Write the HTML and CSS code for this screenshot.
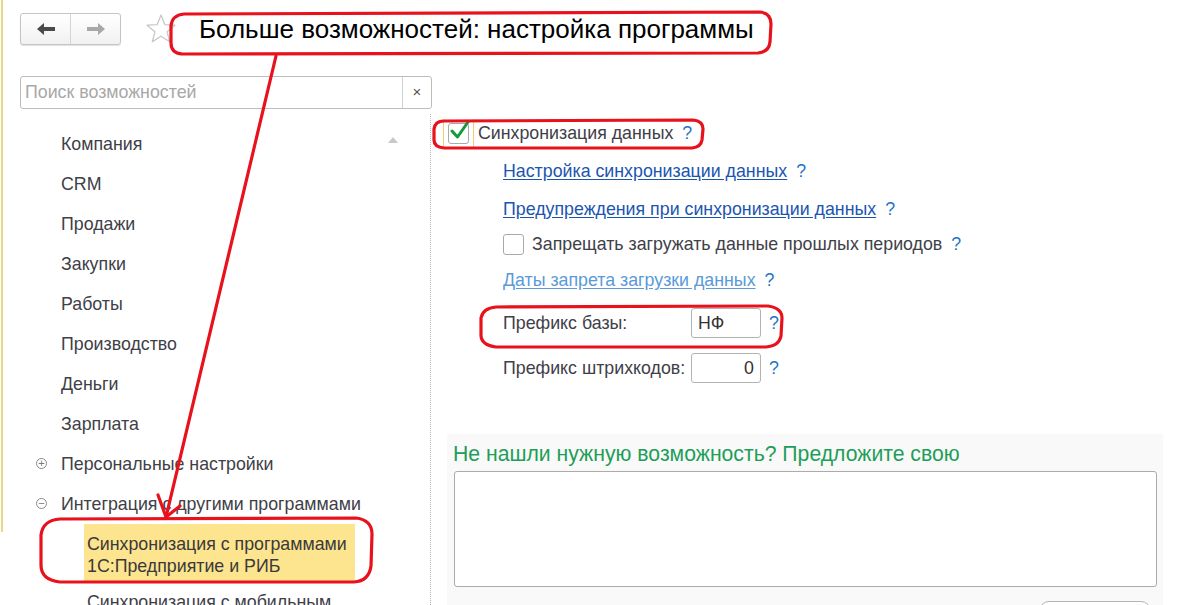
FILE: index.html
```html
<!DOCTYPE html>
<html lang="ru">
<head>
<meta charset="utf-8">
<title>Больше возможностей: настройка программы</title>
<link rel="stylesheet" href="styles.css">
</head>
<body>
<div class="app">
  <header class="topbar">
    <div class="nav">
      <button class="nav-btn back" aria-label="Назад">
        <svg width="20" height="14" viewBox="0 0 20 14"><path d="M1 7 L8 1 L8 5 L19 5 L19 9 L8 9 L8 13 Z" fill="#4a4a4a"/></svg>
      </button>
      <button class="nav-btn fwd" aria-label="Вперёд">
        <svg width="20" height="14" viewBox="0 0 20 14"><path d="M19 7 L12 1 L12 5 L1 5 L1 9 L12 9 L12 13 Z" fill="#a8a8a8"/></svg>
      </button>
    </div>
    <svg class="star" width="32" height="32" viewBox="0 0 32 32"><path d="M16 2 L19.8 11.6 L30 12.2 L22.1 18.8 L24.7 28.8 L16 23.2 L7.3 28.8 L9.9 18.8 L2 12.2 L12.2 11.6 Z" fill="none" stroke="#c8c8c8" stroke-width="1.3" stroke-linejoin="round"/></svg>
    <h1 class="title">Больше возможностей: настройка программы</h1>
  </header>

  <div class="main">
    <aside class="sidebar">
      <div class="search">
        <span class="search-ph">Поиск возможностей</span>
        <span class="search-clear">×</span>
      </div>
      <ul class="tree">
        <li class="tree-item">Компания</li>
        <li class="tree-item">CRM</li>
        <li class="tree-item">Продажи</li>
        <li class="tree-item">Закупки</li>
        <li class="tree-item">Работы</li>
        <li class="tree-item">Производство</li>
        <li class="tree-item">Деньги</li>
        <li class="tree-item">Зарплата</li>
        <li class="tree-item"><span class="toggle">+</span>Персональные настройки</li>
        <li class="tree-item"><span class="toggle">−</span>Интеграция с другими программами</li>
        <li class="tree-sub selected">Синхронизация с программами<br>1С:Предприятие и РИБ</li>
        <li class="tree-sub">Синхронизация с мобильным</li>
        <span class="scroll-up"></span>
      </ul>
    </aside>

    <section class="content">
      <div class="row r1">
        <span class="focus">
          <span class="checkbox checked">
            <svg class="check" width="22" height="22" viewBox="0 0 22 22"><path d="M3 11 L8.5 17 L19 2" fill="none" stroke="#17993a" stroke-width="3" stroke-linecap="round" stroke-linejoin="round"/></svg>
          </span>
        </span>
        <span class="label">Синхронизация данных</span><span class="q">?</span>
      </div>
      <div class="sub">
        <div class="row r2"><a class="link">Настройка синхронизации данных</a><span class="q">?</span></div>
        <div class="row r3"><a class="link">Предупреждения при синхронизации данных</a><span class="q">?</span></div>
        <div class="row r4"><span class="checkbox"></span><span class="label">Запрещать загружать данные прошлых периодов</span><span class="q">?</span></div>
        <div class="row r5"><a class="link light">Даты запрета загрузки данных</a><span class="q">?</span></div>
        <div class="row r6"><span class="field-label">Префикс базы:</span><span class="input">НФ</span><span class="q">?</span></div>
        <div class="row r7"><span class="field-label">Префикс штрихкодов:</span><span class="input num">0</span><span class="q">?</span></div>
      </div>
      <div class="panel">
        <h2 class="panel-title">Не нашли нужную возможность? Предложите свою</h2>
        <div class="textarea"></div>
        <div class="panel-actions"><span class="btn"></span></div>
      </div>
    </section>
  </div>

  <svg class="annot" width="1200" height="605" viewBox="0 0 1200 605">
    <g fill="none" stroke="#e8121c" stroke-width="3.2" stroke-linejoin="round" stroke-linecap="round">
      <path d="M184 14 L760 12 Q771 13 771 24 L770 42 Q769 52 758 53 L182 54 Q171 53 171 43 L171 26 Q172 15 184 14 Z"/>
      <path d="M444 121 L693 120 Q703 121 703 129 L702 140 Q701 147 692 148 L444 148 Q434 147 434 140 L434 129 Q435 121 444 121 Z"/>
      <path d="M496 307 L768 306 Q782 308 782 318 L781 336 Q779 346 766 347 L496 347 Q481 345 481 335 L481 318 Q483 308 496 307 Z"/>
      <path d="M60 519 L356 518 Q372 520 372 534 L371 566 Q369 581 354 582 L60 582 Q41 580 41 565 L41 535 Q43 520 60 519 Z"/>
      <path d="M276 56 L166 517"/>
      <path d="M158 495 L166 517 L180 506"/>
    </g>
  </svg>
</div>
</body>
</html>
```

FILE: styles.css
```css
* { box-sizing: border-box; }

html, body {
  margin: 0;
  padding: 0;
  background: #ffffff;
}

body {
  font-family: Arial, "Liberation Sans", "Noto Sans", sans-serif;
  font-size: 17.8px;
  color: #404048;
  width: 1200px;
  height: 605px;
  overflow: hidden;
}

.app {
  position: relative;
  width: 1200px;
  height: 605px;
  overflow: hidden;
}

.app::before {
  content: "";
  position: absolute;
  left: 1px;
  top: 0;
  width: 2px;
  height: 532px;
  background: #e8d88a;
}

/* top bar */
.topbar {
  display: flex;
  align-items: center;
  height: 76px;
  padding: 13px 0 31px 20px;
}

.nav {
  display: flex;
  width: 101px;
  height: 32px;
  border: 1px solid #c4c4c4;
  border-radius: 3px;
  background: linear-gradient(#ffffff, #f1f1f1);
  box-shadow: 0 1px 1px rgba(0,0,0,0.12);
}

.nav-btn {
  flex: 1;
  display: flex;
  align-items: center;
  justify-content: center;
  border: 0;
  background: transparent;
  padding: 0;
}

.nav-btn.back { border-right: 1px solid #d4d4d4; }

.star {
  margin-left: 24px;
  flex: none;
}

.title {
  margin: 0 0 0 22px;
  font-size: 26px;
  font-weight: normal;
  color: #000;
  white-space: nowrap;
}

/* main */
.main {
  display: flex;
  height: 529px;
}

.sidebar {
  width: 410px;
  margin-left: 20px;
  flex: none;
}

.search {
  display: flex;
  width: 412px;
  height: 33px;
  border: 1px solid #bdbdbd;
  border-radius: 3px;
  background: #fff;
}

.search-ph {
  flex: 1;
  padding-left: 4px;
  line-height: 31px;
  color: #a8a8a8;
}

.search-clear {
  width: 29px;
  border-left: 1px solid #d0d0d0;
  text-align: center;
  line-height: 30px;
  color: #555;
  font-size: 15px;
}

.tree {
  position: relative;
  list-style: none;
  margin: 15px 0 0 0;
  padding: 0;
}

.tree-item {
  display: flex;
  align-items: center;
  height: 40px;
  padding-left: 41px;
  white-space: nowrap;
  position: relative;
}

.toggle {
  position: absolute;
  left: 16px;
  top: 14px;
  width: 11px;
  height: 11px;
  border: 1px solid #8a8a8a;
  border-radius: 50%;
  font-size: 11px;
  line-height: 9px;
  text-align: center;
  color: #777;
}

.tree-sub {
  margin-left: 64px;
  padding: 9px 3px 3px 3px;
  line-height: 22px;
  width: 271px;
  white-space: nowrap;
}

.tree-sub.selected {
  height: 57px;
  background: #fde48e;
  color: #3a3a3a;
}

.tree-sub + .tree-sub { padding-top: 10px; }

.scroll-up {
  position: absolute;
  right: 32px;
  top: 13px;
  width: 0;
  height: 0;
  border-left: 5px solid transparent;
  border-right: 5px solid transparent;
  border-bottom: 6px solid #c8c8c8;
}

/* content */
.content {
  flex: 1;
  margin-top: 38px;
  border-left: 1px dotted #b5b5b5;
  padding-left: 16px;
}

.row {
  display: flex;
  align-items: center;
  white-space: nowrap;
}

.r1 { height: 38px; }
.r2 { height: 38px; }
.r3 { height: 38px; }
.r4 { height: 32px; }
.r5 { height: 40px; }
.r6 { height: 46px; }
.r7 { height: 44px; }

.sub { margin-left: 56px; }

.focus {
  display: flex;
  align-items: center;
  height: 28px;
  padding: 0 4px;
  margin-left: -4px;
  border-left: 1px solid #f0d070;
  border-right: 1px solid #f0d070;
}

.checkbox {
  position: relative;
  display: inline-block;
  width: 21px;
  height: 21px;
  border: 1px solid #a9a9a9;
  border-radius: 3px;
  background: #fff;
  flex: none;
}

.check {
  position: absolute;
  left: 0px;
  top: -4px;
}

.r1 .label { margin-left: 4px; }
.r4 .label { margin-left: 8px; }

.label { color: #404048; }

.q {
  margin-left: 9px;
  color: #1f74c4;
}

.link {
  color: #1c55b0;
  text-decoration: underline;
  text-underline-offset: 2px;
}

.link.light { color: #5a9ad8; }

.field-label {
  width: 188px;
  color: #404048;
}

.input {
  display: inline-block;
  width: 70px;
  height: 30px;
  border: 1px solid #b3b3b3;
  border-radius: 3px;
  padding: 0 6px;
  line-height: 28px;
  color: #333;
}

.input.num { text-align: right; }

.r6 .q, .r7 .q { margin-left: 8px; }

.panel {
  margin-top: 44px;
  width: 716px;
  height: 200px;
  background: #f9f9f9;
  padding: 8px 6px 0 7px;
}

.panel-title {
  margin: 0 0 5px -1px;
  font-size: 21.2px;
  line-height: 24px;
  font-weight: normal;
  color: #1e9e58;
  white-space: nowrap;
}

.textarea {
  width: 703px;
  height: 116px;
  border: 1px solid #ababab;
  border-radius: 3px;
  background: #fff;
}

.panel-actions {
  display: flex;
  justify-content: flex-end;
  padding-top: 14px;
  padding-right: 6px;
}

.btn {
  display: block;
  width: 112px;
  height: 30px;
  border: 1px solid #b5b5b5;
  border-radius: 10px;
  background: linear-gradient(#fff, #f0f0f0);
}

/* annotations */
.annot {
  position: absolute;
  left: 0;
  top: 0;
  pointer-events: none;
}
```
